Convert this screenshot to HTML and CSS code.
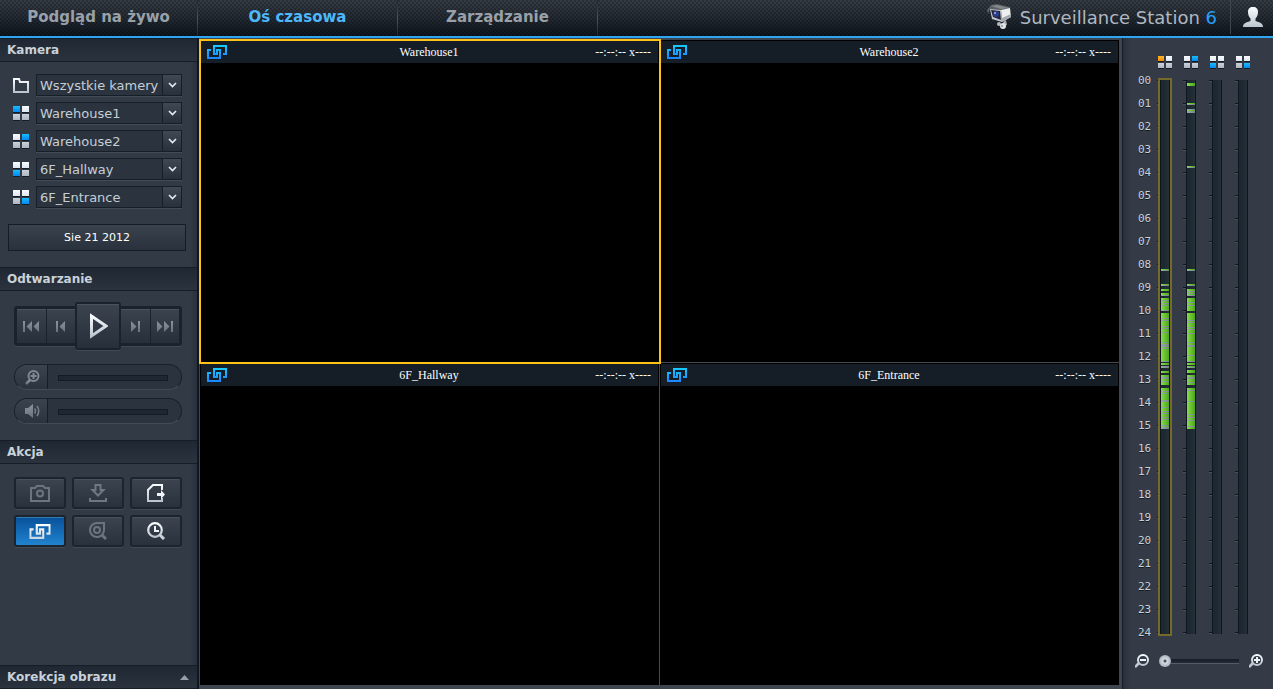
FILE: index.html
```
<!DOCTYPE html>
<html lang="pl">
<head>
<meta charset="utf-8">
<title>Surveillance Station 6</title>
<link rel="stylesheet" href="styles.css">
</head>
<body>
<svg class="defs" width="0" height="0" aria-hidden="true">
  <defs>
    <linearGradient id="light" x1="0" y1="0" x2="0" y2="1"><stop offset="0" stop-color="#fafdff"/><stop offset="1" stop-color="#bcc5cf"/></linearGradient>
    <linearGradient id="dim" x1="0" y1="0" x2="0" y2="1"><stop offset="0" stop-color="#8b949c"/><stop offset="1" stop-color="#6a747d"/></linearGradient>
    <linearGradient id="cyan" gradientUnits="userSpaceOnUse" x1="0" y1="0" x2="0" y2="14"><stop offset="0" stop-color="#16ccff"/><stop offset="1" stop-color="#1c84ff"/></linearGradient>
    <linearGradient id="silver" gradientUnits="userSpaceOnUse" x1="0" y1="0" x2="0" y2="14"><stop offset="0" stop-color="#ffffff"/><stop offset="1" stop-color="#c8d4e0"/></linearGradient>
    <linearGradient id="green" x1="0" y1="0" x2="1" y2="0"><stop offset="0" stop-color="#86de48"/><stop offset="1" stop-color="#4da51c"/></linearGradient>
    <linearGradient id="grey" x1="0" y1="0" x2="1" y2="0"><stop offset="0" stop-color="#9aa7b0"/><stop offset="1" stop-color="#74848a"/></linearGradient>
    <symbol id="link" viewBox="0 0 20 14"><path d="M4 5H1v8h12V5h-3v2M16 9h3V1H7v8h3V7" fill="none" stroke-width="2"/></symbol>
    <symbol id="chevron" viewBox="0 0 9 6"><path d="M1 1l3.500 3.500L8 1" fill="none" stroke="#e6edf3" stroke-width="1.600"/></symbol>
  </defs>
</svg>

<header class="topbar">
  <nav class="tabs">
    <a class="tab" href="#live">Podgląd na żywo</a>
    <a class="tab active" href="#timeline">Oś czasowa</a>
    <a class="tab" href="#manage">Zarządzanie</a>
  </nav>
  <div class="brand">
    <svg width="25" height="26" viewBox="0 0 25 26" aria-hidden="true">
      <path d="M0 6l4-5 6-1 13 3v2l-9 1-11-1-2 5z" fill="#5b6066"/>
      <path d="M4 2l6-1 12 3-8 1z" fill="#85898e"/>
      <path d="M14 6l9-2 1 9-9 5z" fill="#eceef0"/>
      <path d="M15 14l9-4v3l-9 5z" fill="#a6abb1"/>
      <path d="M3 5l11 1 1 12-10-3z" fill="#c3c7cc"/>
      <path d="M4 6l9 1 1 9-8-3z" fill="#22263a"/>
      <circle cx="9" cy="10" r="3" fill="#2b3e8c"/><circle cx="8" cy="9" r="1" fill="#a3b5f2"/>
      <path d="M16 18l3-2 1 5-3 1z" fill="#a9aeb4"/>
      <circle cx="12" cy="20" r="2" fill="#b6babf"/><circle cx="16" cy="22" r="3" fill="#e3e6e9"/><circle cx="15" cy="22" r="1" fill="#888e95"/>
    </svg>
    <span class="brand-name">Surveillance Station <b>6</b></span>
    <button class="user" aria-label="Użytkownik">
      <svg width="20" height="20" viewBox="0 0 20 20"><path d="M10 0C6.500 0 5 2 5 5c0 3 1 5 2.500 6.500V14C6 15 0 15 0 20h20c0-5-6-5-7.500-6v-2.500C14 10 15 8 15 5c0-3-1.500-5-5-5z" fill="url(#light)"/></svg>
    </button>
  </div>
</header>

<div class="app">
  <aside class="sidebar">
    <section>
      <h2>Kamera</h2>
      <div class="cameras">
        <div class="camera-row">
          <svg width="16" height="15" viewBox="0 0 16 15"><path d="M1 1h5l1 3h8v10H1z" fill="none" stroke="url(#light)" stroke-width="2"/></svg>
          <label class="picker"><select aria-label="Grupa kamer"><option>Wszystkie kamery</option></select><span><svg width="9" height="6"><use href="#chevron"/></svg></span></label>
        </div>
        <div class="camera-row">
          <i class="quad on1"><b></b><b></b><b></b><b></b></i>
          <label class="picker"><select aria-label="Kamera 1"><option>Warehouse1</option></select><span><svg width="9" height="6"><use href="#chevron"/></svg></span></label>
        </div>
        <div class="camera-row">
          <i class="quad on2"><b></b><b></b><b></b><b></b></i>
          <label class="picker"><select aria-label="Kamera 2"><option>Warehouse2</option></select><span><svg width="9" height="6"><use href="#chevron"/></svg></span></label>
        </div>
        <div class="camera-row">
          <i class="quad on3"><b></b><b></b><b></b><b></b></i>
          <label class="picker"><select aria-label="Kamera 3"><option>6F_Hallway</option></select><span><svg width="9" height="6"><use href="#chevron"/></svg></span></label>
        </div>
        <div class="camera-row">
          <i class="quad on4"><b></b><b></b><b></b><b></b></i>
          <label class="picker"><select aria-label="Kamera 4"><option>6F_Entrance</option></select><span><svg width="9" height="6"><use href="#chevron"/></svg></span></label>
        </div>
      </div>
      <button class="date">Sie 21 2012</button>
    </section>

    <section>
      <h2>Odtwarzanie</h2>
      <div class="player">
        <div class="side-keys left">
          <button aria-label="Początek"><svg width="16" height="11" viewBox="0 0 16 11"><path d="M0 0h2v11H0zM9 0v11L3.500 5.500zM16 0v11l-5.500-5.500z" fill="url(#dim)"/></svg></button>
          <button aria-label="Poprzedni"><svg width="10" height="11" viewBox="0 0 10 11"><path d="M0 0h2v11H0zM9 0v11L3.500 5.500z" fill="url(#dim)"/></svg></button>
        </div>
        <div class="play-frame">
          <button class="play" aria-label="Odtwórz"><svg width="20" height="26" viewBox="0 0 20 26"><path d="M3.500 3v20L18 13z" fill="none" stroke="url(#light)" stroke-width="3"/></svg></button>
        </div>
        <div class="side-keys right">
          <button aria-label="Następny"><svg width="10" height="11" viewBox="0 0 10 11"><path d="M8 0h2v11H8zM1 0v11l5.500-5.500z" fill="url(#dim)"/></svg></button>
          <button aria-label="Koniec"><svg width="16" height="11" viewBox="0 0 16 11"><path d="M14 0h2v11h-2zM0 0v11l5.500-5.500zM7 0v11l5.500-5.500z" fill="url(#dim)"/></svg></button>
        </div>
      </div>
      <div class="pills">
        <label class="pill">
          <span class="knob"><svg width="15" height="15" viewBox="0 0 15 15"><path d="M5 10l-4 4" stroke="url(#dim)" stroke-width="2.500"/><circle cx="8.500" cy="6" r="5" fill="none" stroke="#7f8992" stroke-width="2"/><path d="M5.500 6h6M8.500 3v6" stroke="#7f8992" stroke-width="2"/></svg></span>
          <input type="range" aria-label="Powiększenie" disabled>
        </label>
        <label class="pill">
          <span class="knob"><svg width="15" height="14" viewBox="0 0 15 14"><path d="M0 4h3l5-4v14l-5-4H0z" fill="url(#dim)"/><path d="M9.500 4.500q2 2.500 0 5M12 2q3.500 5 0 10" fill="none" stroke="#75808a" stroke-width="1.500"/></svg></span>
          <input type="range" aria-label="Głośność" disabled>
        </label>
      </div>
    </section>

    <section class="grow">
      <h2>Akcja</h2>
      <div class="actions">
        <button aria-label="Migawka"><svg width="20" height="17" viewBox="0 0 20 17"><path d="M1 3h4l2-2h6l2 2h4v13H1z" fill="none" stroke="#6c757e" stroke-width="2"/><circle cx="10" cy="8.500" r="3" fill="none" stroke="#6c757e" stroke-width="2"/></svg></button>
        <button aria-label="Pobierz"><svg width="18" height="18" viewBox="0 0 18 18"><path d="M6.500 1h5v5h3L9 11.500 3.500 6h3z" fill="none" stroke="#6f7881" stroke-width="2"/><path d="M1 14v3h16v-3" fill="none" stroke="#6f7881" stroke-width="2"/></svg></button>
        <button aria-label="Eksport"><svg width="18" height="18" viewBox="0 0 18 18"><path d="M15 6V1H6L1 6v11h14v-3" fill="none" stroke="url(#light)" stroke-width="2"/><path d="M10 9h4V6l4 4.500-4 4.500v-3h-4z" fill="#eef3f7"/></svg></button>
        <button class="pressed" aria-label="Synchronizuj"><svg width="22" height="15" viewBox="0 0 20 14" stroke="url(#silver)"><use href="#link"/></svg></button>
        <button aria-label="Analiza"><svg width="18" height="18" viewBox="0 0 18 18"><path d="M15 1H8a7 7 0 1 0 7 7z" fill="none" stroke="#6c757e" stroke-width="2"/><circle cx="8" cy="8" r="3" fill="none" stroke="#6c757e" stroke-width="2"/><path d="M13 13l4 4" stroke="#6c757e" stroke-width="3"/></svg></button>
        <button aria-label="Wyszukiwanie"><svg width="19" height="18" viewBox="0 0 19 18"><circle cx="8" cy="8" r="6.800" fill="none" stroke="url(#light)" stroke-width="2.200"/><path d="M8 4v5h4" fill="none" stroke="#eef3f7" stroke-width="2"/><path d="M13 13l4 4" stroke="#ccd4dc" stroke-width="3"/></svg></button>
      </div>
    </section>
    <h2 class="footer"><span>Korekcja obrazu</span><svg width="9" height="5" viewBox="0 0 9 5"><path d="M0 5L4.500 0 9 5z" fill="#97a0a9"/></svg></h2>
  </aside>

  <main class="videos">
    <article class="video selected"><header><svg width="20" height="14" stroke="url(#cyan)"><use href="#link"/></svg><span>Warehouse1</span><time>--:--:-- x----</time></header></article>
    <article class="video"><header><svg width="20" height="14" stroke="url(#cyan)"><use href="#link"/></svg><span>Warehouse2</span><time>--:--:-- x----</time></header></article>
    <article class="video"><header><svg width="20" height="14" stroke="url(#cyan)"><use href="#link"/></svg><span>6F_Hallway</span><time>--:--:-- x----</time></header></article>
    <article class="video"><header><svg width="20" height="14" stroke="url(#cyan)"><use href="#link"/></svg><span>6F_Entrance</span><time>--:--:-- x----</time></header></article>
  </main>

  <aside class="timeline">
    <div class="chart">
      <ol class="hours" id="hours"></ol>
      <div class="track selected"><i class="quad small on1 orange"><b></b><b></b><b></b><b></b></i><div class="bar" data-track="0"></div></div>
      <div class="track"><i class="quad small on2"><b></b><b></b><b></b><b></b></i><div class="bar" data-track="1"></div></div>
      <div class="track"><i class="quad small on3"><b></b><b></b><b></b><b></b></i><div class="bar"></div></div>
      <div class="track"><i class="quad small on4"><b></b><b></b><b></b><b></b></i><div class="bar"></div></div>
    </div>
    <div class="zoom">
      <svg width="14" height="14" viewBox="0 0 14 14"><path d="M4 9l-4 4" stroke="#c3ccd5" stroke-width="2.500"/><circle cx="8" cy="6" r="5" fill="none" stroke="url(#light)" stroke-width="2"/><path d="M5 6h6" stroke="#eef3f7" stroke-width="2"/></svg>
      <input type="range" min="0" max="100" value="0" aria-label="Skala osi czasu">
      <svg width="14" height="14" viewBox="0 0 14 14"><path d="M4 9l-4 4" stroke="#c3ccd5" stroke-width="2.500"/><circle cx="8" cy="6" r="5" fill="none" stroke="url(#light)" stroke-width="2"/><path d="M5 6h6M8 3v6" stroke="#eef3f7" stroke-width="2"/></svg>
    </div>
  </aside>
</div>
<script src="timeline.js"></script>
</body>
</html>
```
FILE: timeline.js
```
const HOURS = 24;
const ROW = 23;

// [start, length] in chart pixels; 23 pixels make one hour
const recordings = [
  {
    green: [[189, 2], [204, 2], [209, 2], [213, 3], [218, 13], [233, 49], [283, 2], [286, 2], [291, 2], [295, 10], [308, 41]],
    grey: [[190, 1], [205, 1], [215, 1], [220, 1], [223, 1], [225, 1], [230, 1], [238, 1], [240, 1], [246, 1], [248, 1], [252, 1], [262, 1], [264, 3], [268, 1], [281, 1], [286, 2], [297, 2], [301, 1], [311, 1], [313, 1], [320, 2], [327, 1], [331, 1], [333, 1], [337, 1], [339, 1], [345, 1], [347, 2]]
  },
  {
    green: [[3, 3], [23, 2], [29, 4], [86, 2], [189, 2], [204, 2], [209, 7], [218, 13], [233, 49], [283, 2], [286, 2], [290, 3], [295, 10], [308, 41]],
    grey: [[24, 1], [29, 1], [31, 2], [87, 1], [190, 1], [205, 1], [211, 1], [213, 1], [215, 1], [222, 1], [225, 1], [240, 1], [242, 1], [247, 1], [249, 1], [253, 1], [262, 1], [265, 1], [266, 1], [275, 1], [281, 1], [287, 1], [297, 2], [302, 1], [310, 1], [321, 1], [334, 1], [337, 1], [340, 1], [346, 1]]
  }
];

const hours = document.getElementById("hours");
for (let h = 0; h <= HOURS; h++) {
  const item = document.createElement("li");
  item.textContent = String(h).padStart(2, "0");
  hours.append(item);
}

document.querySelectorAll("[data-track]").forEach((bar) => {
  const data = recordings[bar.dataset.track];
  const rects = (list, fill) =>
    list.map(([y, h]) => `<rect x="0" y="${y}" width="8" height="${h}" fill="url(#${fill})"/>`).join("");
  bar.innerHTML = `<svg width="8" height="${HOURS * ROW}">${rects(data.green, "green")}${rects(data.grey, "grey")}</svg>`;
});
```
FILE: styles.css
```
*, *::before, *::after { box-sizing: border-box; }

body {
  margin: 0;
  height: 100vh;
  display: flex;
  flex-direction: column;
  background: #323b45;
  color: #c9d2da;
  font-family: "DejaVu Sans", Verdana, sans-serif;
  font-size: 13px;
}

.defs { position: absolute; }
svg { display: block; flex: none; }
button { margin: 0; padding: 0; border: 0; font: inherit; color: inherit; cursor: pointer; display: flex; align-items: center; justify-content: center; }

/* Top bar */
.topbar {
  flex: none;
  height: 38px;
  display: flex;
  justify-content: space-between;
  border-bottom: 2px solid #2fa4f0;
  background:
    conic-gradient(rgba(0, 0, 0, 0.22) 25%, transparent 0 50%, rgba(0, 0, 0, 0.22) 0 75%, transparent 0) 0 0 / 4px 4px,
    linear-gradient(#363c44, #232a33 50%, #0f151e);
}
.tabs { display: flex; }
.tab {
  width: 200px;
  height: 36px;
  line-height: 35px;
  text-align: center;
  text-decoration: none;
  font-size: 15px;
  font-weight: bold;
  color: #98a1a9;
  border-right: 1px solid;
  border-image: linear-gradient(#1c222a, #4b535c 50%, #1c222a) 1;
}
.tab:first-child { width: 198px; }
.tab.active { color: #4db8fa; }
.brand { display: flex; align-items: center; padding-bottom: 2px; }
.brand-name { margin-left: 8px; font-size: 18px; color: #b0b8c0; white-space: nowrap; }
.brand-name b { font-weight: normal; color: #24a0fa; }
.user { width: 43px; height: 34px; margin-left: 13px; padding-left: 2px; background: none; border-left: 1px solid #3d454e; }

/* Columns */
.app { flex: 1; min-height: 0; display: flex; background: #3c4550; }

/* Sidebar */
.sidebar {
  flex: none;
  width: 199px;
  display: flex;
  flex-direction: column;
  background: linear-gradient(90deg, #323b45 0 190px, #28313b);
  border-right: 2px solid #0f1820;
}
.grow { flex: 1; }
h2 {
  margin: 0;
  height: 24px;
  padding: 0 8px 0 7px;
  display: flex;
  align-items: center;
  justify-content: space-between;
  font-size: 12px;
  font-weight: bold;
  background: linear-gradient(#1f2832, #2b343e);
  border-top: 1px solid #151e27;
  border-bottom: 1px solid #151e27;
}
.cameras { display: grid; gap: 6px; padding: 12px 15px 0 13px; }
.camera-row { display: flex; align-items: center; gap: 7px; height: 22px; }
.picker { position: relative; flex: 1; display: flex; }
.picker select {
  width: 100%;
  height: 22px;
  padding: 0 20px 0 3px;
  appearance: none;
  font: inherit;
  color: #c5ced6;
  background: #2b343e;
  border: 1px solid #161f28;
  border-radius: 0;
  box-shadow: 0 1px #434c56;
}
.picker span {
  position: absolute;
  top: 1px;
  right: 1px;
  bottom: 1px;
  width: 19px;
  display: flex;
  align-items: center;
  justify-content: center;
  pointer-events: none;
  background: linear-gradient(#404953, #28313b);
  border-left: 1px solid #161f28;
}
.quad { display: grid; grid-template-columns: 7px 7px; gap: 1px 2px; flex: none; }
.quad b { height: 7px; background: linear-gradient(#f8fcff, #dfe6ee); border-bottom: 1px solid #151c24; }
.quad b:nth-child(n+3) { background: linear-gradient(#c9d1da, #aeb7c1); }
.quad.on1 b:nth-child(1), .quad.on2 b:nth-child(2), .quad.on3 b:nth-child(3), .quad.on4 b:nth-child(4) { background: linear-gradient(#16bdff, #0787f0); }
.quad.orange b:nth-child(1) { background: linear-gradient(#ffb62c, #f58a00); }
.quad.small { grid-template-columns: 6px 6px; }
.quad.small b { height: 6px; }
.camera-row .quad { padding-top: 1px; }
.date {
  width: 178px;
  height: 27px;
  margin: 16px 8px;
  font-size: 11px;
  color: #fff;
  background: linear-gradient(#3a434d, #29323c);
  border: 1px solid #141d26;
}

.player { display: flex; align-items: center; height: 48px; margin: 11px 15px 0 14px; }
.side-keys { display: flex; gap: 1px; flex: 1; height: 40px; padding: 3px 0; background: #1a232c; box-shadow: 0 1px #414a54; }
.side-keys.left { padding-left: 3px; border-radius: 3px 0 0 3px; }
.side-keys.right { padding-right: 3px; border-radius: 0 3px 3px 0; }
.side-keys button, .play { flex: 1; background: linear-gradient(#3b444e, #27303a); box-shadow: inset 0 1px #4a535d; }
.play-frame { display: flex; width: 46px; height: 48px; padding: 2px; background: #1a232c; border-radius: 3px; box-shadow: 0 1px #414a54; }
.pills { display: grid; gap: 8px; margin: 14px 15px 16px 14px; }
.pill {
  display: flex;
  align-items: center;
  height: 26px;
  overflow: hidden;
  border-radius: 13px;
  background: #2b343e;
  border: 1px solid #18212a;
  border-bottom-color: #434c56;
}
.knob { display: flex; align-items: center; justify-content: center; width: 33px; height: 24px; padding-left: 2px; background: linear-gradient(#3b444e, #2b343e); border-right: 1px solid #161f28; }
.pill input { appearance: none; width: 110px; height: 6px; margin: 2px 0 0 10px; background: #1f2832; border: 1px solid #131c25; }
.pill input::-webkit-slider-thumb { appearance: none; width: 0; }

.actions { display: grid; grid-template-columns: repeat(3, 52px); gap: 6px; padding: 13px 14px; }
.actions button {
  height: 32px;
  background: linear-gradient(#3c454f, #29323c);
  border: 2px solid #1c252e;
  border-radius: 3px;
  box-shadow: 0 1px #424b55, inset 0 1px #48515b;
}
.actions .pressed { background: linear-gradient(#07509a, #2183cf); box-shadow: 0 1px #424b55, inset 0 1px #3579b5; }

/* Video grid */
.videos {
  flex: 1;
  min-width: 0;
  display: grid;
  grid-template-columns: 1fr 1fr;
  grid-template-rows: 1fr 1fr;
  gap: 1px;
  margin: 2px 3px 4px 1px;
  background: #444b53;
}
.video { position: relative; background: #000; padding: 1px; }
.video header {
  display: grid;
  grid-template-columns: 1fr auto 1fr;
  align-items: center;
  height: 22px;
  padding: 0 7px 0 6px;
  background: #151e27;
  color: #fff;
  font-family: "Liberation Serif", serif;
  font-size: 12px;
}
.video time { text-align: right; }
.video.selected::after { content: ""; position: absolute; z-index: 1; inset: -1px -2px -2px -1px; border: 2px solid #ffc219; pointer-events: none; }

/* Timeline */
.timeline { flex: none; width: 151px; padding: 18px 10px 0 12px; background: linear-gradient(90deg, #28313b, #343b46 8px); border-left: 1px solid #151e27; }
.chart { display: flex; }
.hours { width: 20px; margin: 13px 0 0 3px; padding: 0; list-style: none; font-family: "DejaVu Sans Mono", monospace; font-size: 11px; line-height: 23px; text-shadow: 0 1px #151c24; }
.hours li { height: 23px; }
.track { width: 26px; }
.track .quad { margin-bottom: 8px; }
.bar {
  width: 17px;
  height: 562px;
  margin-left: -1px;
  padding: 3px 0 0 4px;
  background:
    linear-gradient(90deg, #0e171f 0 1px, #1e2831 1px 4px, #263039 9px, #0e171f 9px 10px) 3px 3px / 10px 554px no-repeat,
    repeating-linear-gradient(#0e171f 0 1px, #48515b 1px 2px, transparent 2px 23px) 0 3px / 3px 554px no-repeat;
}
.selected .bar { position: relative; }
.selected .bar::before { content: ""; position: absolute; left: 1px; top: 1px; width: 14px; height: 558px; border: 2px solid #766a2b; }
.zoom { display: flex; align-items: center; justify-content: space-between; margin-top: 10px; }
.zoom input { appearance: none; width: 80px; height: 12px; margin: 0; background: linear-gradient(#151e27, #242d37 80%, #555e68 80%) 0 4px / 100% 5px no-repeat; }
.zoom input::-webkit-slider-thumb { appearance: none; width: 12px; height: 12px; border-radius: 50%; background: radial-gradient(#4a535c 0 1px, #d4dae0 2px, #a9b2bb 6px); }
```
